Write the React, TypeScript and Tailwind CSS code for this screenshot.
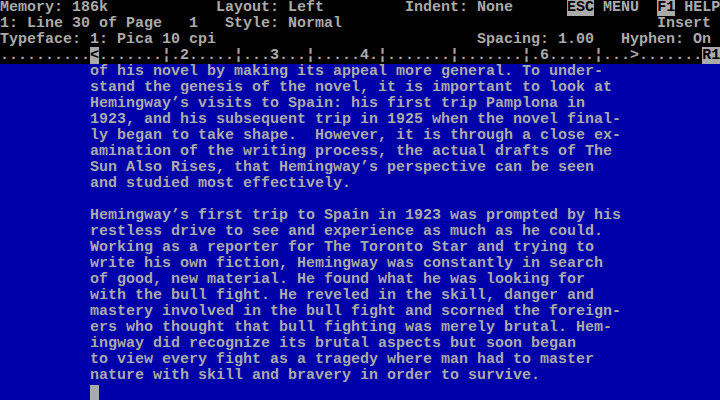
const Hi = ({ children }: { children: React.ReactNode }) => (
  <span className="bg-[#aaaaaa] text-black">{children}</span>
);

const Row = ({ children }: { children?: React.ReactNode }) => (
  <div className="h-4 leading-4 whitespace-pre">{children ?? " "}</div>
);

const body = [
  "of his novel by making its appeal more general. To under-",
  "stand the genesis of the novel, it is important to look at",
  "Hemingway’s visits to Spain: his first trip Pamplona in",
  "1923, and his subsequent trip in 1925 when the novel final-",
  "ly began to take shape.  However, it is through a close ex-",
  "amination of the writing process, the actual drafts of The",
  "Sun Also Rises, that Hemingway’s perspective can be seen",
  "and studied most effectively.",
  "",
  "Hemingway’s first trip to Spain in 1923 was prompted by his",
  "restless drive to see and experience as much as he could.",
  "Working as a reporter for The Toronto Star and trying to",
  "write his own fiction, Hemingway was constantly in search",
  "of good, new material. He found what he was looking for",
  "with the bull fight. He reveled in the skill, danger and",
  "mastery involved in the bull fight and scorned the foreign-",
  "ers who thought that bull fighting was merely brutal. Hem-",
  "ingway did recognize its brutal aspects but soon began",
  "to view every fight as a tragedy where man had to master",
  "nature with skill and bravery in order to survive.",
];

export default function App() {
  return (
    <div className="w-[720px] h-[400px] overflow-hidden bg-black text-[#aaaaaa] text-[15px] font-bold font-['Liberation_Mono',monospace] flex flex-col">
      <Row>
        {"Memory: 186k            Layout: Left         Indent: None      "}
        <Hi>ESC</Hi>
        {" MENU  "}
        <Hi>F1</Hi>
        {" HELP"}
      </Row>
      <Row>{"1: Line 30 of Page   1   Style: Normal                                   Insert"}</Row>
      <Row>{"Typeface: 1: Pica 10 cpi                             Spacing: 1.00   Hyphen: On"}</Row>
      <Row>
        {".........."}
        <Hi>{"<"}</Hi>
        {".......¦.2.....¦...3...¦.....4.¦.......¦.......¦.6.....¦...>......."}
        <Hi>R1</Hi>
      </Row>
      <div className="flex-1 bg-[#0000aa] flex flex-col">
        {body.map((line, i) => (
          <Row key={i}>{"          " + line}</Row>
        ))}
        <div className="h-4 pt-px pl-[90px]">
          <div className="w-[9px] h-[15px] bg-[#aaaaaa]" />
        </div>
      </div>
    </div>
  );
}
